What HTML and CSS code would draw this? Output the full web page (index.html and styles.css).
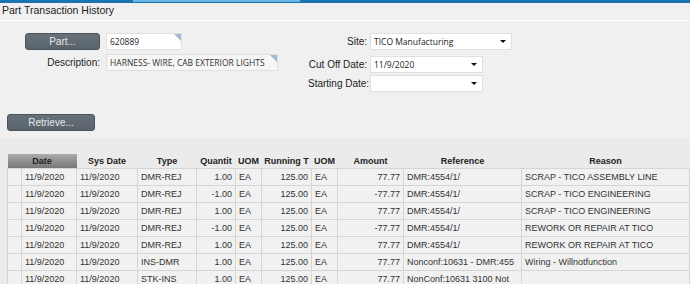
FILE: index.html
```html
<!DOCTYPE html>
<html lang="en">
<head>
    <meta charset="UTF-8">
    <title>Part Transaction History</title>
    <link rel="stylesheet" href="styles.css">
</head>
<body>
    <div class="topbar"><span class="tab"></span></div>
    <div class="title">Part Transaction History</div>

    <div class="form">
        <div class="fields left">
            <button class="btn">Part...</button>
            <div class="input lookup part">620889</div>
            <label>Description:</label>
            <div class="input lookup readonly desc">HARNESS- WIRE, CAB EXTERIOR LIGHTS</div>
        </div>
        <div class="fields right">
            <label>Site:</label>
            <div class="input combo site">TICO Manufacturing<span class="arrow"></span></div>
            <label>Cut Off Date:</label>
            <div class="input combo date">11/9/2020<span class="arrow"></span></div>
            <label>Starting Date:</label>
            <div class="input combo date"><span class="arrow"></span></div>
        </div>
    </div>

    <div class="actions">
        <button class="btn retrieve">Retrieve...</button>
    </div>

    <div class="grid">
        <table>
            <colgroup>
                <col style="width:14px"><col style="width:55px"><col style="width:61px"><col style="width:59px">
                <col style="width:39px"><col style="width:26px"><col style="width:50px"><col style="width:26px">
                <col style="width:66px"><col style="width:118px"><col style="width:168px">
            </colgroup>
            <thead>
                <tr>
                    <th colspan="2" class="sorted">Date</th>
                    <th>Sys Date</th>
                    <th>Type</th>
                    <th>Quantit</th>
                    <th>UOM</th>
                    <th>Running T</th>
                    <th>UOM</th>
                    <th>Amount</th>
                    <th>Reference</th>
                    <th>Reason</th>
                </tr>
            </thead>
            <tbody>
                <tr><td></td><td>11/9/2020</td><td>11/9/2020</td><td>DMR-REJ</td><td class="num">1.00</td><td>EA</td><td class="num">125.00</td><td>EA</td><td class="num">77.77</td><td>DMR:4554/1/</td><td>SCRAP - TICO ASSEMBLY LINE</td></tr>
                <tr><td></td><td>11/9/2020</td><td>11/9/2020</td><td>DMR-REJ</td><td class="num">-1.00</td><td>EA</td><td class="num">125.00</td><td>EA</td><td class="num">-77.77</td><td>DMR:4554/1/</td><td>SCRAP - TICO ENGINEERING</td></tr>
                <tr><td></td><td>11/9/2020</td><td>11/9/2020</td><td>DMR-REJ</td><td class="num">1.00</td><td>EA</td><td class="num">125.00</td><td>EA</td><td class="num">77.77</td><td>DMR:4554/1/</td><td>SCRAP - TICO ENGINEERING</td></tr>
                <tr><td></td><td>11/9/2020</td><td>11/9/2020</td><td>DMR-REJ</td><td class="num">-1.00</td><td>EA</td><td class="num">125.00</td><td>EA</td><td class="num">-77.77</td><td>DMR:4554/1/</td><td>REWORK OR REPAIR AT TICO</td></tr>
                <tr><td></td><td>11/9/2020</td><td>11/9/2020</td><td>DMR-REJ</td><td class="num">1.00</td><td>EA</td><td class="num">125.00</td><td>EA</td><td class="num">77.77</td><td>DMR:4554/1/</td><td>REWORK OR REPAIR AT TICO</td></tr>
                <tr><td></td><td>11/9/2020</td><td>11/9/2020</td><td>INS-DMR</td><td class="num">1.00</td><td>EA</td><td class="num">125.00</td><td>EA</td><td class="num">77.77</td><td>Nonconf:10631 - DMR:455</td><td>Wiring - Willnotfunction</td></tr>
                <tr><td></td><td>11/9/2020</td><td>11/9/2020</td><td>STK-INS</td><td class="num">1.00</td><td>EA</td><td class="num">125.00</td><td>EA</td><td class="num">77.77</td><td>NonConf:10631 3100 Not</td><td></td></tr>
            </tbody>
        </table>
    </div>
</body>
</html>
```

FILE: styles.css
```css
body {
    margin: 0;
    width: 690px;
    height: 284px;
    overflow: hidden;
    background-color: #f0f0f0;
    font-family: "Liberation Sans", Arial, sans-serif;
    color: #222;
}
.topbar {
    display: flex;
    height: 3px;
    background-color: #1a74b2;
}
.tab {
    margin-left: 133px;
    width: 167px;
    height: 2px;
    background-color: #6ab6e2;
}
.title {
    height: 17px;
    line-height: 15px;
    padding-left: 2px;
    font-size: 10.5px;
    border-bottom: 1px solid #fff;
}
.form {
    display: flex;
    padding-top: 12px;
}
.fields {
    display: grid;
    align-items: start;
}
.left {
    margin-left: 25px;
    grid-template-columns: 75px auto;
    grid-template-rows: 21px 17px;
    column-gap: 6px;
}
.right {
    margin-left: 30px;
    grid-template-columns: 59px auto;
    grid-template-rows: 23px 19px 17px;
    column-gap: 3px;
}
label {
    height: 17px;
    line-height: 17px;
    font-size: 10px;
    text-align: right;
    white-space: nowrap;
}
.btn {
    box-sizing: border-box;
    height: 17px;
    width: 75px;
    padding: 0;
    background: linear-gradient(#66717a, #59636b);
    color: #e8e8e8;
    border: 1px solid #4b545a;
    border-radius: 3px;
    font-family: "Liberation Sans", Arial, sans-serif;
    font-size: 10px;
}
.input {
    position: relative;
    box-sizing: border-box;
    height: 17px;
    line-height: 15px;
    padding: 0 3px;
    background-color: #fff;
    border: 1px solid #e0e0e0;
    font-family: "Open Sans", "Noto Sans", sans-serif;
    font-size: 8.5px;
    color: #222;
    white-space: nowrap;
}
.part {
    width: 76px;
}
.desc {
    width: 172px;
}
.readonly {
    background-color: #f6f6f6;
    color: #333;
}
.lookup::after {
    content: "";
    position: absolute;
    top: 0;
    right: 0;
    border-left: 7px solid transparent;
    border-top: 7px solid #a2b8d4;
}
.site {
    width: 142px;
}
.date {
    width: 113px;
}
.arrow {
    position: absolute;
    top: 6px;
    right: 5px;
    border-left: 3px solid transparent;
    border-right: 3px solid transparent;
    border-top: 3px solid #111;
}
.actions {
    padding: 20px 0 0 7px;
}
.retrieve {
    width: 88px;
}
.grid {
    margin-top: 7px;
    padding: 16px 0 0 7px;
    height: 132px;
    overflow: hidden;
    background-color: #ebebeb;
}
table {
    border-collapse: collapse;
    table-layout: fixed;
    width: 682px;
}
th {
    height: 14px;
    padding: 0;
    font-size: 9px;
    font-weight: bold;
    color: #222;
    text-align: center;
    white-space: nowrap;
    overflow: hidden;
}
th.sorted {
    background: linear-gradient(#acacac, #767676);
}
td {
    height: 16px;
    padding: 0 3px;
    font-size: 9px;
    color: #333;
    background-color: #f1f1f1;
    border: 1px solid #d5d5d5;
    white-space: nowrap;
    overflow: hidden;
}
td.num {
    text-align: right;
}
```
